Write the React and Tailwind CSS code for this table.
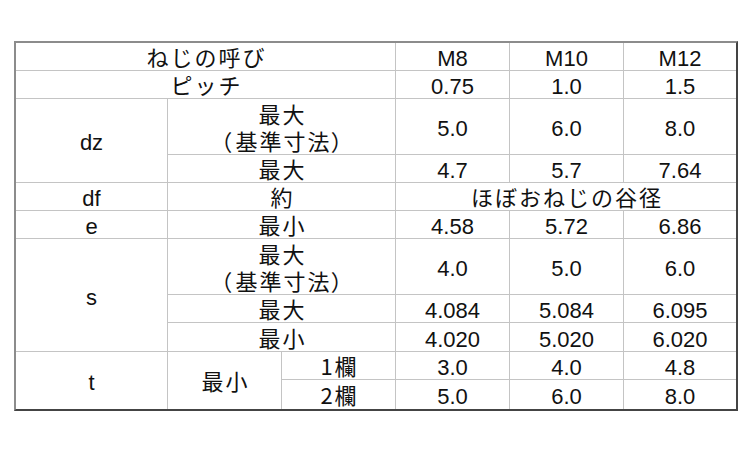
import React from "react";

const jp = { fontFamily: '"Noto Sans CJK JP", "Noto Sans", sans-serif' };
const lat = { fontFamily: '"Liberation Sans", Arial, sans-serif' };

function J({ children, className = "" }) {
  return (
    <div
      className={`bg-white flex flex-col items-center justify-center text-[22px] font-normal leading-[27px] tracking-[2px] pl-[2px] text-[#111] ${className}`}
      style={jp}
    >
      {children}
    </div>
  );
}

function N({ children, className = "" }) {
  return (
    <div
      className={`bg-white flex items-center justify-center text-[22px] leading-[24px] pt-[5px] text-[#111] ${className}`}
      style={lat}
    >
      {children}
    </div>
  );
}

function Std() {
  return (
    <>
      <span>最大</span>
      <span>
        <span className="[font-feature-settings:'palt'] mr-[2px]">（</span>基準寸法<span className="[font-feature-settings:'palt']">）</span>
      </span>
    </>
  );
}

export default function App() {
  return (
    <div className="w-[750px] h-[450px] bg-white pt-[41px] pl-[14px]">
      <div className="w-[724px] border-l-2 border-t-2 border-[#8c8c8c] border-r-2 border-b-2 border-r-[#444] border-b-[#444]">
        <div className="grid gap-px bg-[#c4c4c4] grid-cols-[151px_113px_113px_113px_113px_112px] grid-rows-[27px_27px_55px_27px_27px_27px_55px_27px_28px_27px_29px]">
          <J className="col-span-3">ねじの呼び</J>
          <N>M8</N>
          <N>M10</N>
          <N>M12</N>

          <J className="col-span-3">ピッチ</J>
          <N>0.75</N>
          <N>1.0</N>
          <N>1.5</N>

          <N className="row-span-2 pt-[3px]">dz</N>
          <J className="col-span-2"><Std /></J>
          <N>5.0</N>
          <N>6.0</N>
          <N>8.0</N>

          <J className="col-span-2">最大</J>
          <N>4.7</N>
          <N>5.7</N>
          <N>7.64</N>

          <N>df</N>
          <J className="col-span-2">約</J>
          <J className="col-span-3">ほぼおねじの谷径</J>

          <N>e</N>
          <J className="col-span-2">最小</J>
          <N>4.58</N>
          <N>5.72</N>
          <N>6.86</N>

          <N className="row-span-3 pt-[3px]">s</N>
          <J className="col-span-2"><Std /></J>
          <N>4.0</N>
          <N>5.0</N>
          <N>6.0</N>

          <J className="col-span-2">最大</J>
          <N>4.084</N>
          <N>5.084</N>
          <N>6.095</N>

          <J className="col-span-2">最小</J>
          <N>4.020</N>
          <N>5.020</N>
          <N>6.020</N>

          <N className="row-span-2 pt-[3px]">t</N>
          <J className="row-span-2">最小</J>
          <J>1欄</J>
          <N>3.0</N>
          <N>4.0</N>
          <N>4.8</N>

          <J>2欄</J>
          <N>5.0</N>
          <N>6.0</N>
          <N>8.0</N>
        </div>
      </div>
    </div>
  );
}
